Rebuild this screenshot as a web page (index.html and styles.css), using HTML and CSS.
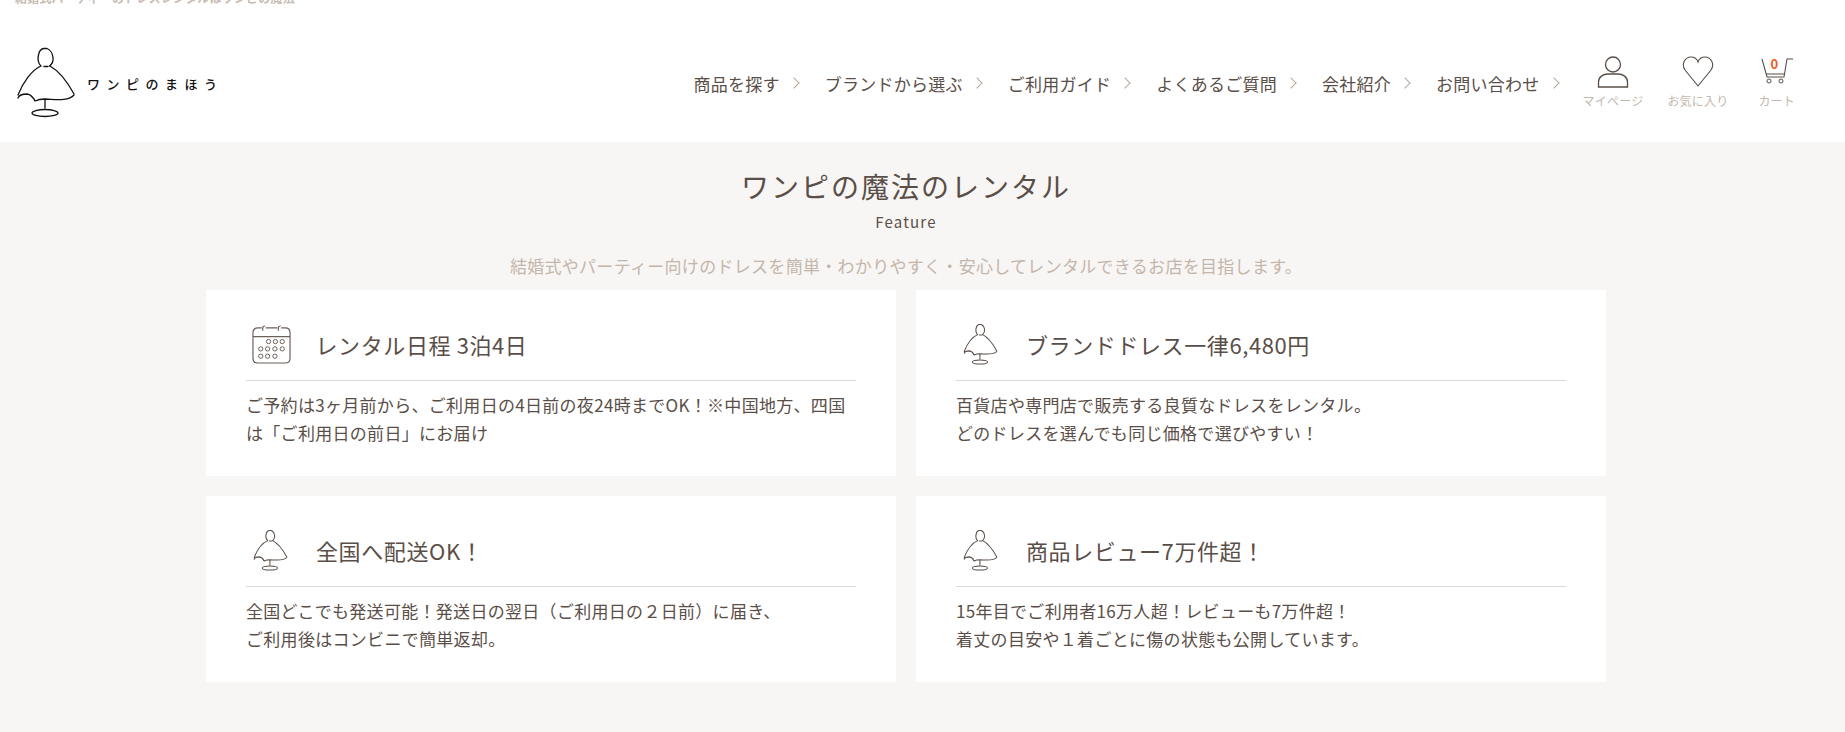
FILE: index.html
```html
<!DOCTYPE html>
<html lang="ja">
<head>
    <meta charset="UTF-8">
    <meta name="viewport" content="width=device-width, initial-scale=1.0">
    <title>ワンピの魔法のレンタル</title>
    <link rel="stylesheet" href="styles.css">
</head>
<body>
    <svg class="icon-defs" width="0" height="0" aria-hidden="true">
        <symbol id="dress" viewBox="0 0 60 74">
            <path fill="none" stroke="currentColor" stroke-linecap="round" stroke-linejoin="round" d="M25 20C22 17 21.500 13 22.500 9C23 6 25 3 27.500 2.500L31 2.500C33.500 3.500 36.500 7 37 11.500C37.500 15 36 18 33.500 20M25 20C16 24 7 36 2 49M34 20C43 25 52 37 58 48M28 20.500L32 20.500M2 52C3 49 6 48 11 48C15 48.500 17 51 19 55C21 54 24 53 29 53C37 53 52 56 58 49M29 53V62"/>
            <ellipse cx="29" cy="67" rx="13" ry="3.500" fill="none" stroke="currentColor"/>
        </symbol>
    </svg>

    <header class="site-header">
        <p class="site-tagline">結婚式パーティーのドレスレンタルはワンピの魔法</p>
        <div class="header-row">
            <a class="logo" href="#">
                <svg class="logo-mark"><use href="#dress"/></svg>
                <span class="logo-text">ワンピのまほう</span>
            </a>
            <nav class="main-nav">
                <a class="nav-link" href="#">商品を探す</a>
                <a class="nav-link" href="#">ブランドから選ぶ</a>
                <a class="nav-link" href="#">ご利用ガイド</a>
                <a class="nav-link" href="#">よくあるご質問</a>
                <a class="nav-link" href="#">会社紹介</a>
                <a class="nav-link" href="#">お問い合わせ</a>
            </nav>
            <div class="user-menu">
                <a class="user-link" href="#">
                    <svg class="user-icon" viewBox="0 0 32 32">
                        <circle cx="16" cy="8.500" r="7.500" fill="none" stroke="currentColor" stroke-width="1.300"/>
                        <path fill="none" stroke="currentColor" stroke-width="1.300" d="M1.500 31V26C1.500 21 6 18 11 18L21 18C26 18 30.500 21 30.500 26V31Z"/>
                    </svg>
                    <span>マイページ</span>
                </a>
                <a class="user-link" href="#">
                    <svg class="user-icon" viewBox="0 0 32 32">
                        <path fill="none" stroke="currentColor" stroke-width="1.100" d="M16 30L3 14C-1 8 3 1 9 1C12 1 15 3 16 6C17 3 20 1 23 1C29 1 33 8 29 14Z"/>
                    </svg>
                    <span>お気に入り</span>
                </a>
                <a class="user-link user-link-cart" href="#">
                    <svg class="user-icon" viewBox="0 0 32 32">
                        <path fill="none" stroke="currentColor" stroke-width="1.100" d="M1 3L6 21H23L26 3H32M5.500 18H23.500"/>
                        <circle cx="8" cy="25" r="2" fill="none" stroke="currentColor"/>
                        <circle cx="20" cy="25" r="2" fill="none" stroke="currentColor"/>
                    </svg>
                    <b class="cart-count">0</b>
                    <span>カート</span>
                </a>
            </div>
        </div>
    </header>

    <main class="feature">
        <h2 class="feature-title">ワンピの魔法のレンタル</h2>
        <p class="feature-sub">Feature</p>
        <p class="feature-lead">結婚式やパーティー向けのドレスを簡単・わかりやすく・安心してレンタルできるお店を目指します。</p>

        <div class="feature-grid">
            <section class="card">
                <div class="card-head">
                    <svg class="card-icon-cal" viewBox="0 0 40 40">
                        <g fill="none" stroke="currentColor">
                            <path stroke-width="1.200" d="M10 3H6C3 3 1 5 1 8V34C1 37 3 39 6 39H34C37 39 39 37 39 34V8C39 5 37 3 34 3H30M14 3H26M1 12H39"/>
                            <path stroke-width="1.200" d="M11 6V3C11 1.500 12 1 13.500 1M27 6V3C27 1.500 28 1 29.500 1"/>
                            <circle cx="17" cy="17" r="2.200"/><circle cx="24" cy="17" r="2.200"/><circle cx="31" cy="17" r="2.200"/>
                            <circle cx="9" cy="24.500" r="2.200"/><circle cx="16" cy="24.500" r="2.200"/><circle cx="23.500" cy="24.500" r="2.200"/><circle cx="31" cy="24.500" r="2.200"/>
                            <circle cx="9" cy="32" r="2.200"/><circle cx="16" cy="32" r="2.200"/><circle cx="23.500" cy="32" r="2.200"/>
                        </g>
                    </svg>
                    <h3 class="card-title">レンタル日程 3泊4日</h3>
                </div>
                <p class="card-text">ご予約は3ヶ月前から、ご利用日の4日前の夜24時までOK！※中国地方、四国は「ご利用日の前日」にお届け</p>
            </section>

            <section class="card">
                <div class="card-head">
                    <svg class="card-icon"><use href="#dress"/></svg>
                    <h3 class="card-title">ブランドドレス一律6,480円</h3>
                </div>
                <p class="card-text">百貨店や専門店で販売する良質なドレスをレンタル。<br>どのドレスを選んでも同じ価格で選びやすい！</p>
            </section>

            <section class="card">
                <div class="card-head">
                    <svg class="card-icon"><use href="#dress"/></svg>
                    <h3 class="card-title">全国へ配送OK！</h3>
                </div>
                <p class="card-text">全国どこでも発送可能！発送日の翌日（ご利用日の２日前）に届き、<br>ご利用後はコンビニで簡単返却。</p>
            </section>

            <section class="card">
                <div class="card-head">
                    <svg class="card-icon"><use href="#dress"/></svg>
                    <h3 class="card-title">商品レビュー7万件超！</h3>
                </div>
                <p class="card-text">15年目でご利用者16万人超！レビューも7万件超！<br>着丈の目安や１着ごとに傷の状態も公開しています。</p>
            </section>
        </div>
    </main>
</body>
</html>
```

FILE: styles.css
```css
body {
    margin: 0;
    padding: 0;
    height: 732px;
    overflow: hidden;
    background-color: #f8f6f4;
    color: #5a4e48;
    font-family: "Noto Sans CJK JP", "Noto Sans", sans-serif;
}

a {
    color: inherit;
    text-decoration: none;
}

.icon-defs {
    display: block;
}

/* header */
.site-header {
    height: 142px;
    background-color: #fff;
    overflow: hidden;
}

.site-tagline {
    margin: -11px 0 0 15px;
    height: 18px;
    line-height: 18px;
    font-size: 12px;
    font-weight: 700;
    letter-spacing: 0.2px;
    color: #c9bcb3;
}

.header-row {
    display: flex;
    align-items: flex-start;
    padding: 39px 50px 0 16px;
}

.logo {
    display: flex;
    align-items: center;
    color: #111;
}

.logo-mark {
    width: 60px;
    height: 74px;
    stroke-width: 1.300;
}

.logo-text {
    margin-left: 11px;
    font-size: 13px;
    font-weight: 500;
    letter-spacing: 6.500px;
    white-space: nowrap;
}

.main-nav {
    display: flex;
    gap: 27px;
    margin: 25px 0 0 auto;
}

.nav-link {
    display: flex;
    align-items: center;
    height: 24px;
    font-size: 17px;
    letter-spacing: 0.250px;
    white-space: nowrap;
}

.nav-link::after {
    content: "";
    width: 8px;
    height: 8px;
    margin-left: 10px;
    border-top: 1px solid #b5a8a0;
    border-right: 1px solid #b5a8a0;
    box-sizing: border-box;
    transform: rotate(45deg);
}

.user-menu {
    display: flex;
    gap: 24px;
    margin: 10px 0 0 25px;
}

.user-link {
    position: relative;
    display: flex;
    flex-direction: column;
    align-items: center;
    font-size: 12px;
    letter-spacing: 0.200px;
    color: #c4b7ae;
    white-space: nowrap;
}

.user-link span {
    margin-top: 5px;
    line-height: 16px;
}

.user-link-cart {
    margin-left: 6px;
}

.user-icon {
    width: 32px;
    height: 32px;
    color: #5a4e48;
}

.cart-count {
    position: absolute;
    top: 0;
    left: 12px;
    font-size: 13px;
    line-height: 16px;
    color: #f05a1e;
}

/* feature */
.feature {
    width: 1400px;
    margin-left: 206px;
    text-align: center;
}

.feature-title {
    margin: 0;
    padding-top: 24px;
    font-size: 28px;
    font-weight: 400;
    line-height: 40px;
    letter-spacing: 2px;
}

.feature-sub {
    margin: 6px 0 0;
    font-size: 15px;
    line-height: 20px;
    letter-spacing: 1.200px;
}

.feature-lead {
    margin: 22px 0 0;
    font-size: 17px;
    line-height: 24px;
    letter-spacing: 0.300px;
    color: #c4b5ab;
}

.feature-grid {
    display: grid;
    grid-template-columns: 690px 690px;
    gap: 20px;
    margin-top: 12px;
    text-align: left;
}

.card {
    height: 186px;
    padding: 30px 40px 0;
    box-sizing: border-box;
    background-color: #fff;
}

.card-head {
    display: flex;
    align-items: center;
    gap: 24.500px;
    height: 48px;
    padding-bottom: 12px;
    border-bottom: 1px solid #ddd9d5;
}

.card-icon {
    width: 43px;
    height: 43px;
    margin-left: 2.500px;
    flex: none;
    stroke-width: 1.800;
}

.card-icon-cal {
    width: 39px;
    height: 39px;
    margin-left: 6px;
    flex: none;
    color: #6b5f59;
}

.card-title {
    margin: 0;
    font-size: 22px;
    font-weight: 400;
    line-height: 30px;
    letter-spacing: 0.600px;
}

.card-text {
    margin: 10px 0 0;
    font-size: 17px;
    line-height: 28px;
    letter-spacing: 0.300px;
}
```
